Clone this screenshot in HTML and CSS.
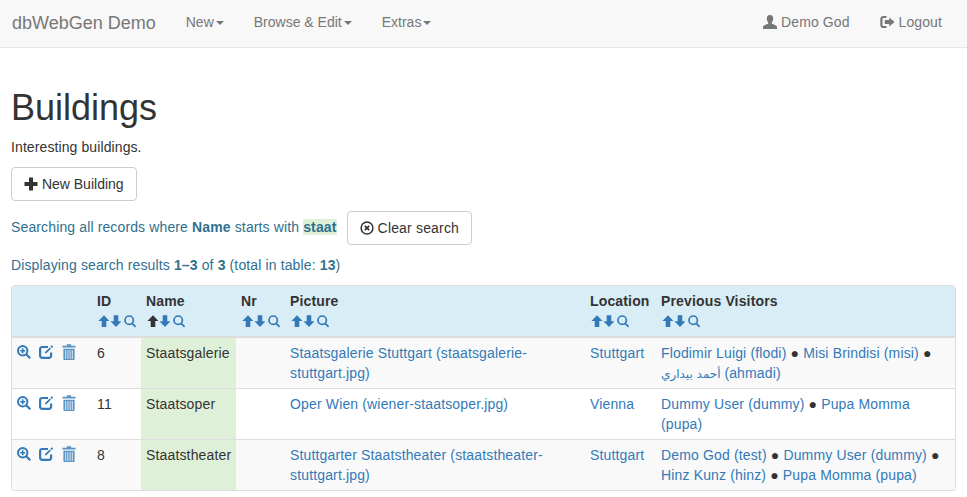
FILE: index.html
```html
<!DOCTYPE html>
<html lang="en">
  <head>
    <meta charset="UTF-8" />
    <title>Buildings</title>
    <link rel="stylesheet" href="styles.css">
  </head>
  <body>
    <svg class="defs" width="0" height="0">
      <symbol id="i-up" viewBox="0 0 12 14"><path d="M7 1.2 12.6 7H9.3V13H4.7V7H1.4Z"/></symbol>
      <symbol id="i-down" viewBox="0 0 12 14"><path d="M7 13 12.6 7.2H9.3V1.2H4.7V7.2H1.4Z"/></symbol>
      <symbol id="i-search" viewBox="0 0 14 14"><path fill="none" stroke="currentColor" stroke-width="1.7" d="M7.2 2a4.2 4.2 0 1 0 0 8.4 4.2 4.2 0 0 0 0-8.4ZM10.2 9.4 13.6 12.8"/></symbol>
      <symbol id="i-zoom" viewBox="0 0 14 14"><path fill="none" stroke="currentColor" stroke-width="2" d="M5.7 1a4.7 4.7 0 1 0 0 9.4 4.7 4.7 0 0 0 0-9.4Z"/><path fill="none" stroke="currentColor" stroke-width="2.2" d="M9.2 9.2 13.3 13.3"/><path fill="none" stroke="currentColor" stroke-width="1.6" d="M3.2 5.7H8.2M5.7 3.2V8.2"/></symbol>
      <symbol id="i-edit" viewBox="0 0 14 14"><path fill="none" stroke="currentColor" stroke-width="2.2" d="M9 2H3.2A2.1 2.1 0 0 0 1.1 4.1V10.8A2.1 2.1 0 0 0 3.2 12.9H10A2.1 2.1 0 0 0 12.1 10.8V7.5"/><path d="M10.8 2.4 12 3.6 7.7 8 5.8 8.4 6.3 6.7ZM12.2.6 13 .4 14 1.4 13.8 2.2 12.8 3 11.4 1.6Z"/></symbol>
      <symbol id="i-trash" viewBox="0 0 14 16"><path d="M4.8.3H9.2V1.8H13.6V3.6H.4V1.8H4.8ZM1.4 4.8H12.6V15A1 1 0 0 1 11.6 16H2.4A1 1 0 0 1 1.4 15Z"/><path fill="none" stroke="#fff" stroke-opacity=".8" d="M3.7 6V15M5.9 6V15M8.1 6V15M10.3 6V15"/></symbol>
      <symbol id="i-user" viewBox="0 0 14 14"><path d="M7 0C9.2 0 10.3 1.7 10.2 3.8 10.1 5.5 9.5 6.8 8.8 7.6V8.8C10.6 9.6 13.6 10.2 14 11.6V14H0V11.6C.4 10.2 3.4 9.6 5.2 8.8V7.6C4.5 6.8 3.9 5.5 3.8 3.8 3.7 1.7 4.8 0 7 0Z"/></symbol>
      <symbol id="i-logout" viewBox="0 0 15 14"><path fill="none" stroke="currentColor" stroke-width="2.2" d="M6.5 2H3.4A2 2 0 0 0 1.4 4V10A2 2 0 0 0 3.4 12H6.5"/><path d="M9.2 2.6 14.6 7 9.2 11.4V9H4.8V5H9.2Z"/></symbol>
      <symbol id="i-plus" viewBox="0 0 14 14"><path d="M5 .5H9V5H13.5V9H9V13.5H5V9H.5V5H5Z"/></symbol>
      <symbol id="i-clear" viewBox="0 0 14 14"><circle cx="7" cy="7" r="5.9" fill="none" stroke="currentColor" stroke-width="1.5"/><path fill="none" stroke="currentColor" stroke-width="1.8" d="M4.8 4.8 9.2 9.2M9.2 4.8 4.8 9.2"/></symbol>
    </svg>

    <nav class="navbar">
      <a class="brand" href="#">dbWebGen Demo</a>
      <ul class="nav">
        <li><a href="#">New<span class="caret"></span></a></li>
        <li><a href="#">Browse &amp; Edit<span class="caret"></span></a></li>
        <li><a href="#">Extras<span class="caret"></span></a></li>
      </ul>
      <ul class="nav nav-right">
        <li><a href="#"><svg class="icon"><use href="#i-user"/></svg> Demo God</a></li>
        <li><a href="#"><svg class="icon icon-logout"><use href="#i-logout"/></svg> Logout</a></li>
      </ul>
    </nav>

    <main class="content">
      <h1>Buildings</h1>
      <p class="lead">Interesting buildings.</p>
      <a class="btn" href="#"><svg class="icon"><use href="#i-plus"/></svg> New Building</a>

      <div class="search-line">
        <span class="info">Searching all records where <b>Name</b> starts with <b class="match">staat</b></span>
        <a class="btn btn-clear" href="#"><svg class="icon"><use href="#i-clear"/></svg> Clear search</a>
      </div>

      <p class="info results">Displaying search results <b>1–3</b> of <b>3</b> (total in table: <b>13</b>)</p>

      <div class="panel">
        <table class="records">
          <colgroup>
            <col class="c-actions"><col class="c-id"><col class="c-name"><col class="c-nr"><col class="c-picture"><col class="c-location"><col class="c-visitors">
          </colgroup>
          <thead>
            <tr>
              <th></th>
              <th>ID
                <div class="sort"><svg class="arrow"><use href="#i-up"/></svg><svg class="arrow"><use href="#i-down"/></svg><svg class="find"><use href="#i-search"/></svg></div>
              </th>
              <th>Name
                <div class="sort"><svg class="arrow active"><use href="#i-up"/></svg><svg class="arrow"><use href="#i-down"/></svg><svg class="find"><use href="#i-search"/></svg></div>
              </th>
              <th>Nr
                <div class="sort"><svg class="arrow"><use href="#i-up"/></svg><svg class="arrow"><use href="#i-down"/></svg><svg class="find"><use href="#i-search"/></svg></div>
              </th>
              <th>Picture
                <div class="sort"><svg class="arrow"><use href="#i-up"/></svg><svg class="arrow"><use href="#i-down"/></svg><svg class="find"><use href="#i-search"/></svg></div>
              </th>
              <th>Location
                <div class="sort"><svg class="arrow"><use href="#i-up"/></svg><svg class="arrow"><use href="#i-down"/></svg><svg class="find"><use href="#i-search"/></svg></div>
              </th>
              <th>Previous Visitors
                <div class="sort"><svg class="arrow"><use href="#i-up"/></svg><svg class="arrow"><use href="#i-down"/></svg><svg class="find"><use href="#i-search"/></svg></div>
              </th>
            </tr>
          </thead>
          <tbody>
            <tr class="odd">
              <td>
                <div class="actions">
                  <a href="#"><svg class="act"><use href="#i-zoom"/></svg></a>
                  <a href="#"><svg class="act"><use href="#i-edit"/></svg></a>
                  <a href="#"><svg class="act-trash"><use href="#i-trash"/></svg></a>
                </div>
              </td>
              <td>6</td>
              <td class="hit">Staatsgalerie</td>
              <td></td>
              <td><a href="#">Staatsgalerie Stuttgart (staatsgalerie-stuttgart.jpg)</a></td>
              <td><a href="#">Stuttgart</a></td>
              <td><a href="#">Flodimir Luigi (flodi)</a> ● <a href="#">Misi Brindisi (misi)</a> ● <a href="#"><span class="arabic">أحمد بيداري</span> (ahmadi)</a></td>
            </tr>
            <tr>
              <td>
                <div class="actions">
                  <a href="#"><svg class="act"><use href="#i-zoom"/></svg></a>
                  <a href="#"><svg class="act"><use href="#i-edit"/></svg></a>
                  <a href="#"><svg class="act-trash"><use href="#i-trash"/></svg></a>
                </div>
              </td>
              <td>11</td>
              <td class="hit">Staatsoper</td>
              <td></td>
              <td><a href="#">Oper Wien (wiener-staatsoper.jpg)</a></td>
              <td><a href="#">Vienna</a></td>
              <td><a href="#">Dummy User (dummy)</a> ● <a href="#">Pupa Momma (pupa)</a></td>
            </tr>
            <tr class="odd">
              <td>
                <div class="actions">
                  <a href="#"><svg class="act"><use href="#i-zoom"/></svg></a>
                  <a href="#"><svg class="act"><use href="#i-edit"/></svg></a>
                  <a href="#"><svg class="act-trash"><use href="#i-trash"/></svg></a>
                </div>
              </td>
              <td>8</td>
              <td class="hit">Staatstheater</td>
              <td></td>
              <td><a href="#">Stuttgarter Staatstheater (staatstheater-stuttgart.jpg)</a></td>
              <td><a href="#">Stuttgart</a></td>
              <td><a href="#">Demo God (test)</a> ● <a href="#">Dummy User (dummy)</a> ● <a href="#">Hinz Kunz (hinz)</a> ● <a href="#">Pupa Momma (pupa)</a></td>
            </tr>
          </tbody>
        </table>
      </div>
    </main>
  </body>
</html>
```

FILE: styles.css
```css
* {
  box-sizing: border-box;
}
body {
  margin: 0;
  font-family: "Liberation Sans", Arial, sans-serif;
  font-size: 14px;
  line-height: 20px;
  color: #333;
  background: #fff;
}
a {
  color: #337ab7;
  text-decoration: none;
}
svg {
  fill: currentColor;
}
.defs {
  position: absolute;
}
.navbar {
  display: flex;
  height: 48px;
  padding: 0 10px 0 12px;
  background: #f8f8f8;
  border-bottom: 1px solid #e7e7e7;
}
.brand {
  padding: 13px 15px 13px 0;
  font-size: 18px;
  color: #777;
}
.nav {
  display: flex;
  margin: 0;
  padding: 0;
  list-style: none;
}
.nav-right {
  margin-left: auto;
  letter-spacing: 0.1px;
}
.nav a {
  display: block;
  padding: 12px 15px;
  color: #777;
}
.caret {
  display: inline-block;
  margin-left: 2px;
  vertical-align: middle;
  border-top: 4px solid;
  border-left: 4px solid transparent;
  border-right: 4px solid transparent;
}
.icon {
  width: 14px;
  height: 14px;
  vertical-align: -2px;
}
.icon-logout {
  width: 15px;
}
.content {
  padding: 0 11px;
}
h1 {
  margin: 40px 0 10px;
  font-size: 36px;
  font-weight: 500;
  line-height: 39px;
}
.lead {
  margin: 0 0 10px;
  letter-spacing: 0.1px;
}
.btn {
  display: inline-block;
  height: 34px;
  padding: 6px 12px;
  color: #333;
  background: #fff;
  border: 1px solid #ccc;
  border-radius: 4px;
}
.btn-clear {
  letter-spacing: 0.17px;
}
.search-line {
  display: flex;
  align-items: center;
  gap: 10px;
  margin: 10px 0;
}
.search-line .info {
  margin-bottom: 2px;
}
.info {
  color: #31708f;
  letter-spacing: 0.13px;
}
.match {
  background: #dff0d8;
}
.results {
  margin: 0 0 10px;
}
.panel {
  border: 1px solid #ddd;
  border-radius: 4px;
  overflow: hidden;
  box-shadow: 0 1px 1px rgba(0, 0, 0, 0.05);
}
.records {
  width: 945px;
  table-layout: fixed;
  border-collapse: separate;
  border-spacing: 0;
  letter-spacing: 0.15px;
}
.c-actions {
  width: 80px;
}
.c-id,
.c-nr {
  width: 49px;
}
.c-name {
  width: 95px;
}
.c-picture {
  width: 300px;
}
.c-location {
  width: 71px;
}
.c-visitors {
  width: 301px;
}
th {
  padding: 5px;
  text-align: left;
  background: #d9edf7;
  border-bottom: 2px solid #ddd;
}
td {
  padding: 5px;
  vertical-align: top;
  border-top: 1px solid #ddd;
}
tbody tr:first-child td {
  border-top: 0;
}
.odd td {
  background: #f9f9f9;
}
.odd td.hit,
td.hit {
  background: #dff0d8;
}
.arabic {
  font-family: "DejaVu Sans", sans-serif;
  font-size: 12px;
  line-height: 1;
  letter-spacing: 0;
}
.sort {
  display: flex;
  align-items: center;
  height: 20px;
  color: #337ab7;
}
.arrow {
  width: 12px;
  height: 14px;
}
.arrow.active {
  color: #333;
}
.find {
  width: 14px;
  height: 14px;
  margin-left: 1px;
}
.actions {
  display: flex;
  gap: 8px;
}
.actions a {
  display: block;
  height: 20px;
  padding-top: 2px;
}
.act {
  display: block;
  width: 14px;
  height: 14px;
}
.act-trash {
  display: block;
  width: 14px;
  height: 16px;
  margin: -1px 0 0 1px;
  opacity: 0.8;
}
```
